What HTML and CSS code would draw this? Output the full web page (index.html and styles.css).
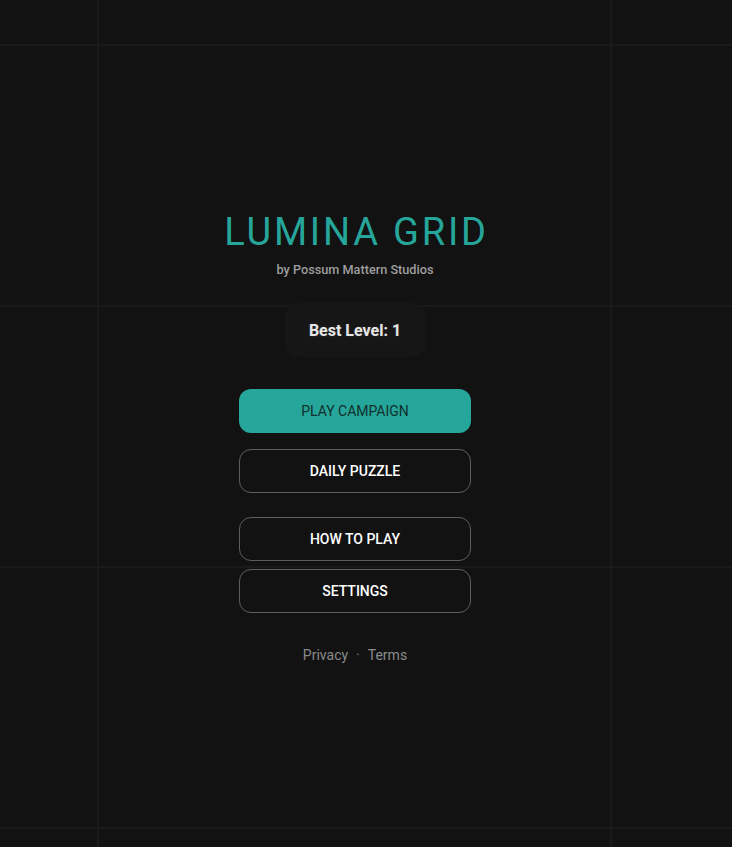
FILE: index.html
```html
<!DOCTYPE html>
<html lang="en">
<head>
<meta charset="utf-8">
<title>Lumina Grid</title>
<link rel="stylesheet" href="styles.css">
</head>
<body>
<main class="menu">
  <h1 class="title">LUMINA GRID</h1>
  <p class="byline">by Possum Mattern Studios</p>
  <div class="best">Best Level: 1</div>
  <div class="buttons">
    <button class="btn btn-primary">PLAY CAMPAIGN</button>
    <button class="btn btn-outline btn-daily">DAILY PUZZLE</button>
    <button class="btn btn-outline btn-how">HOW TO PLAY</button>
    <button class="btn btn-outline btn-settings">SETTINGS</button>
  </div>
  <nav class="footer">
    <a href="#">Privacy</a>
    <span class="dot">·</span>
    <a href="#">Terms</a>
  </nav>
</main>
</body>
</html>
```
FILE: styles.css
```css
* { box-sizing: border-box; }
html, body { margin: 0; height: 100%; }
body {
  background-color: #121212;
  background-image:
    linear-gradient(to right, #1a1a1a 0 2px, transparent 2px),
    linear-gradient(to bottom, #1a1a1a 0 2px, transparent 2px);
  background-size: 513px 261px;
  background-position: 97px 44px;
  font-family: Roboto, "Liberation Sans", sans-serif;
  color: #e0e0e0;
}
.menu {
  display: flex;
  flex-direction: column;
  align-items: center;
  padding-top: 210px;
  padding-right: 22px;
}
.title {
  margin: 0;
  font-weight: 400;
  font-size: 38px;
  line-height: 44px;
  letter-spacing: 2.8px;
  color: #26a69a;
  padding-left: 3px;
}
.byline {
  margin: 8px 0 0;
  font-size: 12.7px;
  font-weight: 500;
  color: #9e9e9e;
  line-height: 16px;
}
.best {
  margin-top: 25px;
  width: 141px;
  height: 54px;
  display: flex;
  align-items: center;
  justify-content: center;
  background: #161616;
  border-radius: 14px;
  font-size: 16px;
  font-weight: 700;
  color: #e6e6e6;
  text-shadow: 0 0 2px rgba(255,255,255,0.15);
}
.buttons {
  margin-top: 32px;
  display: flex;
  flex-direction: column;
  width: 232px;
}
.btn {
  height: 44px;
  border-radius: 12px;
  font-family: Roboto, "Liberation Sans", sans-serif;
  font-size: 14px;
  cursor: pointer;
}
.btn-primary {
  background: #26a69a;
  border: none;
  color: #10302c;
  font-weight: 400;
}
.btn-outline {
  background: transparent;
  border: 1px solid #5e5e5e;
  color: #ffffff;
  font-weight: 500;
}
.btn-daily { margin-top: 16px; }
.btn-how { margin-top: 24px; }
.btn-settings { margin-top: 8px; }
.footer {
  margin-top: 34px;
  display: flex;
  gap: 8px;
  font-size: 14px;
  color: #8a8a8a;
}
.footer a { color: #8a8a8a; text-decoration: none; }
.dot { color: #777; }
```
